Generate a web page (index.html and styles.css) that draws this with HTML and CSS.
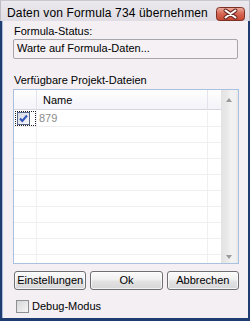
FILE: index.html
```html
<!DOCTYPE html>
<html lang="de">
<head>
<meta charset="utf-8">
<title>Daten von Formula 734 übernehmen</title>
<link rel="stylesheet" href="styles.css">
</head>
<body>
<div class="window">
  <div class="titlebar">
    <span class="title">Daten von Formula 734 übernehmen</span>
    <span class="close">
      <svg width="29" height="14" viewBox="0 0 29 14">
        <defs>
          <linearGradient id="cg" x1="0" y1="0" x2="0" y2="1">
            <stop offset="0" stop-color="#eeb1a4"/>
            <stop offset="0.45" stop-color="#d76a56"/>
            <stop offset="1" stop-color="#c4432f"/>
          </linearGradient>
        </defs>
        <rect x="0.5" y="0.5" width="28" height="13" rx="3" fill="url(#cg)" stroke="#7c3127"/>
        <path d="M9.5 3.5 L19.5 10.5 M19.5 3.5 L9.5 10.5" stroke="#6e2a22" stroke-width="4" stroke-linecap="round" fill="none"/>
        <path d="M9.5 3.5 L19.5 10.5 M19.5 3.5 L9.5 10.5" stroke="#ffffff" stroke-width="2" stroke-linecap="round" fill="none"/>
      </svg>
    </span>
  </div>
  <div class="body">
    <div class="label">Formula-Status:</div>
    <div class="textbox">Warte auf Formula-Daten...</div>
    <div class="label label-files">Verfügbare Projekt-Dateien</div>
    <div class="listview">
      <div class="lv-main">
        <div class="lv-header">
          <div class="hc hc-check"></div>
          <div class="hc hc-name">Name</div>
          <div class="hc hc-fill"></div>
        </div>
        <div class="lv-rows">
          <div class="row">
            <div class="cell c-check">
              <span class="focus">
                <span class="cb cb-checked">
                  <svg width="11" height="11" viewBox="0 0 11 11"><path d="M2 5.5 L4.3 8 L9 2.5" stroke="#2f55b8" stroke-width="2" fill="none"/></svg>
                </span>
              </span>
            </div>
            <div class="cell c-name">879</div>
            <div class="cell c-fill"></div>
          </div>
          <div class="row"><div class="cell c-check"></div><div class="cell c-name"></div><div class="cell c-fill"></div></div>
          <div class="row"><div class="cell c-check"></div><div class="cell c-name"></div><div class="cell c-fill"></div></div>
          <div class="row"><div class="cell c-check"></div><div class="cell c-name"></div><div class="cell c-fill"></div></div>
          <div class="row"><div class="cell c-check"></div><div class="cell c-name"></div><div class="cell c-fill"></div></div>
          <div class="row"><div class="cell c-check"></div><div class="cell c-name"></div><div class="cell c-fill"></div></div>
          <div class="row"><div class="cell c-check"></div><div class="cell c-name"></div><div class="cell c-fill"></div></div>
          <div class="row"><div class="cell c-check"></div><div class="cell c-name"></div><div class="cell c-fill"></div></div>
          <div class="row"><div class="cell c-check"></div><div class="cell c-name"></div><div class="cell c-fill"></div></div>
          <div class="row"><div class="cell c-check"></div><div class="cell c-name"></div><div class="cell c-fill"></div></div>
        </div>
      </div>
      <div class="scrollbar">
        <span class="arrow arrow-up"></span>
        <span class="arrow arrow-down"></span>
      </div>
    </div>
    <div class="buttons">
      <button class="btn">Einstellungen</button>
      <button class="btn">Ok</button>
      <button class="btn">Abbrechen</button>
    </div>
    <div class="check">
      <span class="cb cb-plain"></span>
      <span class="check-label">Debug-Modus</span>
    </div>
  </div>
</div>
</body>
</html>
```

FILE: styles.css
```css
* {
  box-sizing: border-box;
}

html, body {
  margin: 0;
  padding: 0;
}

body {
  width: 250px;
  height: 321px;
  overflow: hidden;
  font-family: "Liberation Sans", Arial, sans-serif;
  font-size: 11px;
  line-height: 13px;
  color: #000;
  background: #f3eff3;
}

.window {
  width: 250px;
  height: 321px;
  display: flex;
  flex-direction: column;
}

.titlebar {
  height: 21px;
  flex: none;
  display: flex;
  align-items: flex-start;
  justify-content: space-between;
  padding: 5px 4px 0 6px;
  background: linear-gradient(#ebe9ed, #dfdde3);
  border-left: 1px solid #bdbcc4;
  border-right: 1px solid #bdbcc4;
  border-top: 1px solid #c9c8ce;
}

.title {
  font-size: 12px;
  line-height: 15px;
  letter-spacing: 0.15px;
  white-space: nowrap;
}

.close {
  display: block;
  width: 29px;
  height: 14px;
  margin-top: 1px;
}

.close svg {
  display: block;
}

.body {
  flex: 1;
  display: flex;
  flex-direction: column;
  padding: 4px 9px 0 11px;
  background: #f3eff3;
  border-left: 2px solid #1e3c6f;
  border-right: 2px solid #1e3c6f;
  border-bottom: 3px solid #1e3c6f;
  box-shadow: inset 1px 0 0 #a9bddb;
}

.label {
  padding-left: 1px;
  height: 13px;
  white-space: nowrap;
}

.label-files {
  margin-top: 15px;
}

.textbox {
  margin-top: 1px;
  width: 225px;
  height: 20px;
  padding: 2px 3px 0;
  border: 1px solid #a7a6ac;
  border-radius: 2px;
  background: #f5f1f5;
  white-space: nowrap;
}

.listview {
  margin-top: 2px;
  width: 226px;
  height: 175px;
  display: flex;
  border: 1px solid #a9c0df;
  background: #fff;
  overflow: hidden;
}

.lv-main {
  flex: 1;
  overflow: hidden;
}

.lv-header {
  display: flex;
  height: 20px;
  border-bottom: 1px solid #d6d6de;
  background: linear-gradient(#ffffff, #f3f3f9);
}

.hc {
  padding-top: 4px;
}

.hc-check {
  width: 23px;
  border-right: 1px solid #e4e4ec;
}

.hc-name {
  width: 171px;
  padding-left: 6px;
  border-right: 1px solid #e4e4ec;
}

.hc-fill {
  flex: 1;
}

.lv-rows {
  padding-top: 1px;
}

.row {
  display: flex;
  height: 16px;
  border-bottom: 1px solid #f0eef0;
}

.cell {
  height: 15px;
  line-height: 15px;
}

.c-check {
  width: 23px;
  border-right: 1px solid #f2eff2;
}

.c-name {
  width: 171px;
  padding-left: 2px;
  color: #8c8c8c;
  border-right: 1px solid #f2eff2;
}

.c-fill {
  flex: 1;
}

.focus {
  display: block;
  margin-left: 1px;
  width: 21px;
  height: 15px;
  padding: 0 0 0 1px;
  border: 1px dotted #222;
}

.cb {
  display: block;
  width: 13px;
  height: 13px;
}

.cb-checked {
  border: 1px solid #56698c;
  background: linear-gradient(135deg, #d9dce6, #f6f6fa);
}

.cb-checked svg {
  display: block;
}

.cb-plain {
  border: 1px solid #8e8f93;
  background: linear-gradient(135deg, #d6d6d8, #f6f6f6);
}

.scrollbar {
  width: 17px;
  flex: none;
  display: flex;
  flex-direction: column;
  justify-content: space-between;
  padding: 8px 0 4px 5px;
  background: linear-gradient(to right, #e3e3e3, #e9e9e9 35%, #f2f2f2 60%, #f0f0f0 85%, #e6e6e6);
}

.arrow {
  display: block;
  width: 0;
  height: 0;
  border-left: 3.5px solid transparent;
  border-right: 3.5px solid transparent;
}

.arrow-up {
  border-bottom: 4px solid #9a9a9a;
}

.arrow-down {
  border-top: 4px solid #9a9a9a;
}

.buttons {
  margin-top: 7px;
  padding-left: 1px;
  display: flex;
  gap: 4px;
}

.btn {
  width: 73px;
  height: 19px;
  padding: 0;
  margin: 0;
  font-family: "Liberation Sans", Arial, sans-serif;
  font-size: 11px;
  line-height: 13px;
  color: #000;
  border: 1px solid #6f6f72;
  border-radius: 3px;
  background: linear-gradient(#fbfbfb, #f0f0f0 45%, #e2e2e2 55%, #d7d7d9);
  box-shadow: inset 0 0 0 1px rgba(255, 255, 255, 0.7);
}

.check {
  margin-top: 10px;
  padding-left: 3px;
  display: flex;
  align-items: center;
  height: 13px;
}

.check-label {
  margin-left: 3px;
  white-space: nowrap;
}
```
